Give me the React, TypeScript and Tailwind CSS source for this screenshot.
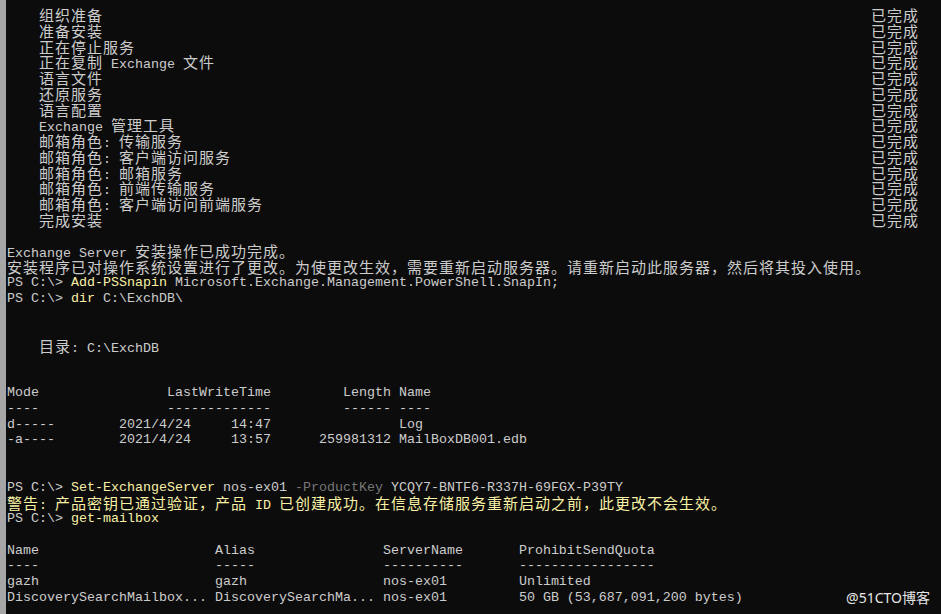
import React from "react";

const CJK = /([\u3000-\u303f\u4e00-\u9fff\uff00-\uffef]+)/;

// CJK runs are drawn in a CJK face, padded out to the console's double cell (16px)
const T = ({ s }: { s: string }) => (
  <>
    {s.split(CJK).map((p, i) =>
      i % 2 ? (
        <span key={i} className="font-['Noto_Sans_CJK_SC',sans-serif] text-[15px] tracking-[1px]">
          {p}
        </span>
      ) : (
        p
      )
    )}
  </>
);

const Line = ({ children }: { children?: React.ReactNode }) => (
  <div className="h-[15.75px] leading-[15.75px]">{children}</div>
);

const Prompt = ({ cmd, children }: { cmd: string; children?: React.ReactNode }) => (
  <Line>
    PS C:\&gt; <span className="text-[#f9f1a5]">{cmd}</span>
    {children}
  </Line>
);

const steps = [
  "组织准备",
  "准备安装",
  "正在停止服务",
  "正在复制 Exchange 文件",
  "语言文件",
  "还原服务",
  "语言配置",
  "Exchange 管理工具",
  "邮箱角色: 传输服务",
  "邮箱角色: 客户端访问服务",
  "邮箱角色: 邮箱服务",
  "邮箱角色: 前端传输服务",
  "邮箱角色: 客户端访问前端服务",
  "完成安装",
];

export default function App() {
  return (
    <div className="relative flex w-[941px] h-[614px] overflow-hidden bg-[#0c0c0c]">
      <div className="w-[6px] shrink-0 bg-[#a6a6a6]" />
      <div className="pl-px pt-[7px] font-['Liberation_Mono',monospace] text-[13.333px] text-[#cccccc] whitespace-pre">
        {steps.map((s) => (
          <div key={s} className="flex w-[912px] h-[15.75px] leading-[15.75px]">
            <div className="flex-1">
              {"    "}
              <T s={s} />
            </div>
            <div>
              <T s="已完成" />
            </div>
          </div>
        ))}
        <Line />
        <Line>
          <T s="Exchange Server 安装操作已成功完成。" />
        </Line>
        <Line>
          <T s="安装程序已对操作系统设置进行了更改。为使更改生效，需要重新启动服务器。请重新启动此服务器，然后将其投入使用。" />
        </Line>
        <Prompt cmd="Add-PSSnapin"> Microsoft.Exchange.Management.PowerShell.SnapIn;</Prompt>
        <Prompt cmd="dir"> C:\ExchDB\</Prompt>
        <Line />
        <Line />
        <Line>
          {"    "}
          <T s="目录: C:\ExchDB" />
        </Line>
        <Line />
        <Line />
        <Line>{"Mode                LastWriteTime         Length Name"}</Line>
        <Line>{"----                -------------         ------ ----"}</Line>
        <Line>{"d-----        2021/4/24     14:47                Log"}</Line>
        <Line>{"-a----        2021/4/24     13:57      259981312 MailBoxDB001.edb"}</Line>
        <Line />
        <Line />
        <Prompt cmd="Set-ExchangeServer">
          {" nos-ex01 "}
          <span className="text-[#767676]">-ProductKey</span>
          {" YCQY7-BNTF6-R337H-69FGX-P39TY"}
        </Prompt>
        <Line>
          <span className="text-[#f9f1a5]">
            <T s="警告: 产品密钥已通过验证，产品 ID 已创建成功。在信息存储服务重新启动之前，此更改不会生效。" />
          </span>
        </Line>
        <Prompt cmd="get-mailbox" />
        <Line />
        <Line>{"Name                      Alias                ServerName       ProhibitSendQuota"}</Line>
        <Line>{"----                      -----                ----------       -----------------"}</Line>
        <Line>{"gazh                      gazh                 nos-ex01         Unlimited"}</Line>
        <Line>{"DiscoverySearchMailbox... DiscoverySearchMa... nos-ex01         50 GB (53,687,091,200 bytes)"}</Line>
      </div>
      <div className="absolute right-[11px] bottom-[8px] font-['Noto_Sans','Noto_Sans_CJK_SC',sans-serif] text-[14px] leading-[16px] text-[#e6e6e6]">
        @51CTO博客
      </div>
    </div>
  );
}
